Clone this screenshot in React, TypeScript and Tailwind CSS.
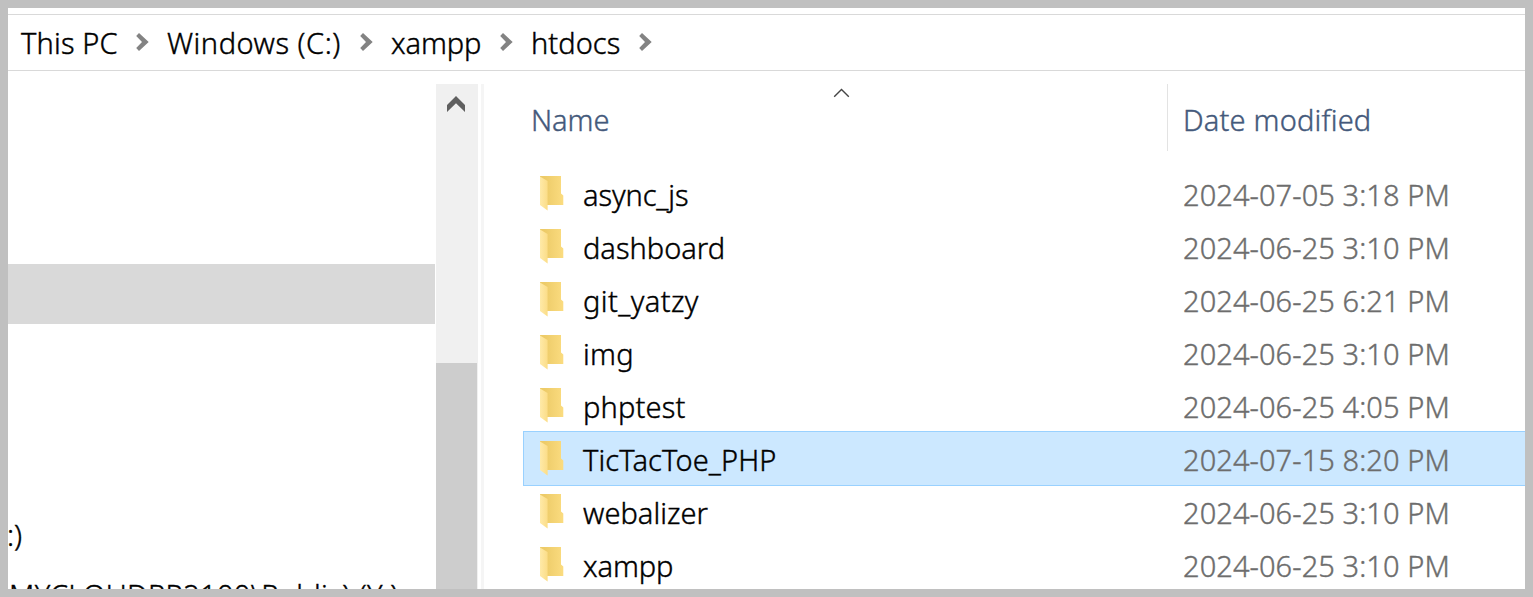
import React from "react";

type Entry = { name: string; date: string; tracking: string; selected?: boolean };

const entries: Entry[] = [
  { name: "async_js", date: "2024-07-05 3:18 PM", tracking: "tracking-[-0.1px]" },
  { name: "dashboard", date: "2024-06-25 3:10 PM", tracking: "tracking-[0px]" },
  { name: "git_yatzy", date: "2024-06-25 6:21 PM", tracking: "tracking-[0.4px]" },
  { name: "img", date: "2024-06-25 3:10 PM", tracking: "tracking-[0.3px]" },
  { name: "phptest", date: "2024-06-25 4:05 PM", tracking: "tracking-[0.15px]" },
  { name: "TicTacToe_PHP", date: "2024-07-15 8:20 PM", tracking: "tracking-[0.1px]", selected: true },
  { name: "webalizer", date: "2024-06-25 3:10 PM", tracking: "tracking-[0.05px]" },
  { name: "xampp", date: "2024-06-25 3:10 PM", tracking: "tracking-[-0.1px]" },
];

const crumbs = [
  { label: "This PC", width: "w-[115px]", tracking: "tracking-[0.15px]" },
  { label: "Windows (C:)", width: "w-[193px]", tracking: "tracking-[0.5px]" },
  { label: "xampp", width: "w-[109px]", tracking: "tracking-[-0.1px]" },
  { label: "htdocs", width: "w-[108px]", tracking: "tracking-[0.05px]" },
];

function Chevron() {
  return (
    <svg className="mb-[2px] h-[18px] w-[13px] shrink-0" viewBox="0 0 13 18" fill="#838383">
      <path d="M3 0 12.7 9 3 18 0.2 15 6 9 0.2 3Z" />
    </svg>
  );
}

function Folder() {
  return (
    <svg className="h-[35px] w-[24px] shrink-0" viewBox="0 0 24 35">
      <defs>
        <linearGradient id="back" x1="0" x2="1">
          <stop offset="0.2" stopColor="#edcb68" />
          <stop offset="1" stopColor="#fbdc80" />
        </linearGradient>
        <linearGradient id="flap" x1="0" x2="1">
          <stop offset="0" stopColor="#ffeaa8" />
          <stop offset="1" stopColor="#fbdd88" />
        </linearGradient>
      </defs>
      <path d="M0 0H21V17.5L23.3 19.5V29H7L0 20Z" fill="url(#back)" />
      <path d="M0 0.5 7.6 5V34.5L0 29Z" fill="url(#flap)" />
    </svg>
  );
}

function Breadcrumb() {
  return (
    <nav className="mt-[6px] flex h-[57px] shrink-0 items-center border-y border-[#d9d9d9] pl-[13px]">
      {crumbs.map((c) => (
        <React.Fragment key={c.label}>
          <span className={`${c.width} ${c.tracking} shrink-0 whitespace-pre`}>{c.label}</span>
          <span className="flex w-[31px] shrink-0 items-center">
            <Chevron />
          </span>
        </React.Fragment>
      ))}
    </nav>
  );
}

function NavigationPane() {
  return (
    <aside className="flex w-[428px] shrink-0 flex-col overflow-hidden whitespace-pre">
      <div className="mt-[180px] h-[60px] w-[427px] shrink-0 bg-[#d9d9d9]" />
      <div className="mt-[180px] flex h-[60px] shrink-0 items-center pt-px">
        <span className="-ml-px tracking-[0px]">:)</span>
      </div>
      <div className="flex h-[60px] shrink-0 items-center pt-px pl-[1px] tracking-[0.35px]">
        MYCLOUDPR2100\Public) (Y:)
      </div>
    </aside>
  );
}

function Scrollbar() {
  return (
    <div className="flex w-[42px] shrink-0 flex-col bg-[#f0f0f0]">
      <div className="flex h-[279px] shrink-0 justify-center pt-[12px]">
        <svg className="mr-[2px] h-[17px] w-[18px]" viewBox="0 0 18 17" fill="#5f5f5f">
          <path d="M9 0 18 9V16L9 7.3 0 16V9Z" />
        </svg>
      </div>
      <div className="w-[41px] flex-1 bg-[#cdcdcd]" />
    </div>
  );
}

function FileList() {
  return (
    <main className="flex min-w-0 flex-1 flex-col">
      <div className="flex h-[67px] shrink-0 text-[#44597b]">
        <div className="relative flex w-[683px] shrink-0 items-center pt-[4px] pl-[47px]">
          <span className="tracking-[-0.05px]">Name</span>
          <svg
            className="absolute top-[4px] left-[349px] h-[10px] w-[17px]"
            viewBox="0 0 17 10"
            fill="none"
            stroke="#444"
            strokeWidth="1.4"
          >
            <path d="M1.2 8.8 8.5 1.6 15.8 8.8" />
          </svg>
        </div>
        <div className="flex flex-1 items-center border-l border-[#e3e3e3] pt-[4px] pl-[15px] tracking-[0.2px]">
          Date modified
        </div>
      </div>
      <div className="mt-[16px] flex flex-col pl-[39px]">
        {entries.map((e) => (
          <div
            key={e.name}
            className={`flex shrink-0 items-center ${
              e.selected
                ? "-my-px h-[55px] border-y border-l border-[#99d1ff] bg-[#cce8ff] pl-[16px]"
                : "h-[53px] pl-[17px]"
            }`}
          >
            <span className="flex w-[43px] shrink-0">
              <Folder />
            </span>
            <span className={`w-[600px] shrink-0 pt-[2px] ${e.tracking}`}>{e.name}</span>
            <span className="pt-[2px] whitespace-pre tracking-[0.08px] text-[#6d6d6d]">{e.date}</span>
          </div>
        ))}
      </div>
    </main>
  );
}

export default function App() {
  return (
    <div className="h-[597px] w-[1533px] bg-[#c0c0c0] p-[8px] font-['Noto_Sans','Open_Sans',sans-serif] text-[29px] leading-[40px] font-light text-black [-webkit-text-stroke:0.4px_currentColor]">
      <div className="flex h-full flex-col overflow-hidden bg-white">
        <Breadcrumb />
        <div className="flex min-h-0 flex-1 overflow-hidden pt-[13px]">
          <NavigationPane />
          <Scrollbar />
          <div className="ml-[3px] w-[3px] shrink-0 bg-[#f5f5f5]" />
          <FileList />
        </div>
      </div>
    </div>
  );
}
